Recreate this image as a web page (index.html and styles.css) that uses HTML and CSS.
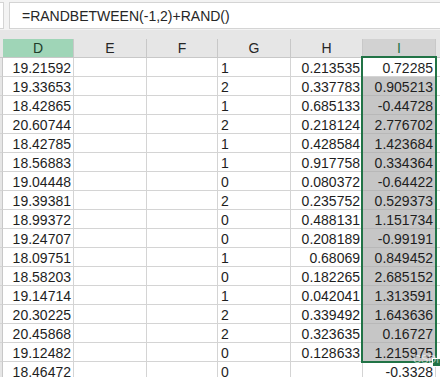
FILE: index.html
```html
<!DOCTYPE html>
<html>
<head>
<meta charset="utf-8">
<link rel="stylesheet" href="styles.css">
</head>
<body>
<div class="formula-bar">
  <div class="name-box"></div>
  <div class="fx-input">=RANDBETWEEN(-1,2)+RAND()</div>
</div>
<div class="band"></div>
<div class="sheet">
  <div class="grid" id="grid">
    <div class="hd rh"></div>
    <div class="hd act">D</div>
    <div class="hd">E</div>
    <div class="hd">F</div>
    <div class="hd">G</div>
    <div class="hd">H</div>
    <div class="hd selh">I</div>
    <div class="hd last"></div>
  </div>
  <div class="selection"><div class="handle"></div></div>
  <div class="watermark">CSDN @谁晨</div>
</div>
<script src="app.js"></script>
</body>
</html>
```

FILE: app.js
```js
var D = ["19.21592","19.33653","18.42865","20.60744","18.42785","18.56883","19.04448","19.39381","18.99372","19.24707","18.09751","18.58203","19.14714","20.30225","20.45868","19.12482","18.46472"];
var G = ["1","2","1","2","1","1","0","2","0","0","1","0","1","2","2","0","0"];
var H = ["0.213535","0.337783","0.685133","0.218124","0.428584","0.917758","0.080372","0.235752","0.488131","0.208189","0.68069","0.182265","0.042041","0.339492","0.323635","0.128633",""];
var I = ["0.72285","0.905213","-0.44728","2.776702","1.423684","0.334364","-0.64422","0.529373","1.151734","-0.99191","0.849452","2.685152","1.313591","1.643636","0.16727","1.215975","-0.3328"];
var grid = document.getElementById("grid");
function cell(cls, text) {
  var c = document.createElement("div");
  c.className = "c " + cls;
  c.textContent = text;
  grid.appendChild(c);
}
for (var r = 0; r < D.length; r++) {
  cell("rh", "");
  cell("num", D[r]);
  cell("", "");
  cell("", "");
  cell("txt", G[r]);
  cell("num", H[r]);
  cell("num" + (r > 0 && r < 16 ? " sel" : ""), I[r]);
  cell("last", "");
}
```

FILE: styles.css
```css
html, body {
  margin: 0;
  padding: 0;
  background: #ffffff;
  font-family: "Liberation Sans", Arial, sans-serif;
  font-size: 14px;
  color: #1e1e1e;
  overflow: hidden;
  height: 377px;
}
.formula-bar {
  height: 30px;
  display: flex;
  align-items: stretch;
  background: #f3f3f3;
  box-sizing: border-box;
  padding: 2px 0 1px 0;
}
.name-box {
  width: 3px;
  background: #fff;
  border: 1px solid #d4d4d4;
  border-left: none;
}
.fx-input {
  flex: 1;
  margin-left: 5px;
  background: #fff;
  border: 1px solid #d4d4d4;
  border-right: none;
  padding-left: 12px;
  line-height: 26px;
  color: #262626;
}
.band {
  height: 9px;
  background: #e6e6e6;
}
.sheet {
  position: relative;
}
.grid {
  display: grid;
  grid-template-columns: 3px 71px 73px 71px 73px 72px 73px 1fr;
  grid-auto-rows: 19px;
}
.hd {
  background: #e6e6e6;
  border-right: 1px solid #c8c8c8;
  border-bottom: 1px solid #c8c8c8;
  box-sizing: border-box;
  text-align: center;
  line-height: 18px;
  color: #262626;
}
.hd.act {
  background: #9fd5b7;
  color: #1e3c2a;
}
.hd.selh {
  background: #d2d2d2;
  color: #217346;
}
.hd.last, .hd.rh {
  border-right: none;
}
.c {
  box-sizing: border-box;
  border-right: 1px solid #d4d4d4;
  border-bottom: 1px solid #d4d4d4;
  line-height: 15px;
  padding-top: 3px;
  white-space: nowrap;
  overflow: hidden;
}
.c.rh {
  background: #e6e6e6;
  border-right: 1px solid #c8c8c8;
}
.c.num {
  text-align: right;
  padding-right: 2px;
}
.c.txt {
  padding-left: 3px;
}
.c.sel {
  background: #c6c6c6;
  border-bottom-color: #b8b8b8;
  border-right-color: #b8b8b8;
}
.c.last {
  border-right: none;
}
.selection {
  position: absolute;
  left: 361px;
  top: 17px;
  width: 76px;
  height: 307px;
  border: 2px solid #217346;
  box-sizing: border-box;
}
.handle {
  position: absolute;
  right: -6px;
  bottom: -6px;
  width: 7px;
  height: 7px;
  background: #217346;
  border: 1px solid #fff;
}
.watermark {
  position: absolute;
  left: 413px;
  top: 311px;
  font-size: 11px;
  color: rgba(255, 255, 255, 0.6);
  white-space: nowrap;
  font-family: "Liberation Sans", "Noto Sans CJK SC", sans-serif;
}
```
